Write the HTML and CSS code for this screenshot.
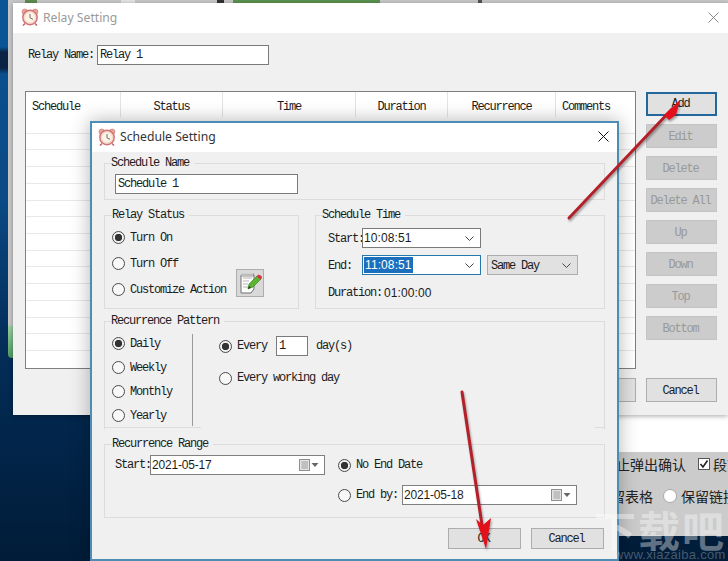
FILE: index.html
```html
<!DOCTYPE html>
<html lang="en">
<head>
<meta charset="utf-8">
<title>Relay Setting</title>
<link rel="stylesheet" href="styles.css">
</head>
<body>
<div class="desk">
  <div class="back-top"></div>
  <div class="back-left"></div>
  <div class="back-right">
    <div class="back-white"></div>
    <div class="back-gray">
      <div class="back-row first"><span>禁止弹出确认</span><span class="check"><svg viewBox="0 0 10 10" width="10" height="10"><path d="M1.5 5l2.5 3 4.500-6.500" fill="none" stroke="#222" stroke-width="1.600"/></svg></span><span>段前</span></div>
      <div class="back-row second"><span>保留表格</span><span class="back-radio"></span><span>保留链接</span></div>
    </div>
  </div>

  <section class="window relay">
    <header class="titlebar relay-title">
      <svg class="clock" viewBox="0 0 18 18" width="18" height="18"><use href="#clock-icon"/></svg>
      <span class="title-text">Relay Setting</span>
      <svg class="close" viewBox="0 0 11 11" width="11" height="11"><path d="M0.500 0.500l10 10M10.500 0.500l-10 10" stroke="#8a8a8a" stroke-width="1"/></svg>
    </header>
    <div class="relay-body">
      <div class="name-row"><span class="name-label">Relay Name:</span><div class="field name-field">Relay 1</div></div>
      <div class="relay-grid">
        <table class="list">
          <thead>
            <tr><th class="c1">Schedule</th><th class="c2">Status</th><th class="c3">Time</th><th class="c4">Duration</th><th class="c5">Recurrence</th><th class="c6">Comments</th></tr>
          </thead>
          <tbody>
            <tr><td colspan="6"></td></tr><tr><td colspan="6"></td></tr><tr><td colspan="6"></td></tr>
            <tr><td colspan="6"></td></tr><tr><td colspan="6"></td></tr><tr><td colspan="6"></td></tr>
            <tr><td colspan="6"></td></tr><tr><td colspan="6"></td></tr><tr><td colspan="6"></td></tr>
            <tr><td colspan="6"></td></tr><tr><td colspan="6"></td></tr><tr><td colspan="6"></td></tr>
            <tr><td colspan="6"></td></tr><tr><td colspan="6"></td></tr><tr><td colspan="6"></td></tr>
          </tbody>
        </table>
        <div class="side">
          <div class="btn add">Add</div>
          <div class="btn off">Edit</div>
          <div class="btn off">Delete</div>
          <div class="btn off">Delete All</div>
          <div class="btn off">Up</div>
          <div class="btn off">Down</div>
          <div class="btn off">Top</div>
          <div class="btn off">Bottom</div>
        </div>
        <div class="btn relay-ok">OK</div>
        <div class="btn nudge">Cancel</div>
      </div>
    </div>
  </section>

  <section class="window dialog">
    <header class="titlebar dialog-title">
      <svg class="clock" viewBox="0 0 18 18" width="18" height="18"><use href="#clock-icon"/></svg>
      <span class="title-text dark">Schedule Setting</span>
      <svg class="close" viewBox="0 0 11 11" width="11" height="11"><path d="M0.500 0.500l10 10M10.500 0.500l-10 10" stroke="#111" stroke-width="1"/></svg>
    </header>
    <div class="dialog-body">
      <fieldset class="group g-name">
        <legend>Schedule Name</legend>
        <div class="field sched-field">Schedule 1</div>
      </fieldset>

      <div class="two-up">
        <fieldset class="group g-status">
          <legend>Relay Status</legend>
          <div class="status-inner">
            <div class="stack26">
              <label class="radio"><input type="radio" name="st" checked>Turn On</label>
              <label class="radio"><input type="radio" name="st">Turn Off</label>
              <label class="radio"><input type="radio" name="st">Customize Action</label>
            </div>
            <div class="icon-btn">
              <svg viewBox="0 0 26 26" width="26" height="26">
                <path d="M4 5h13v14l-3 4H4z" fill="#fdfdfd" stroke="#6f6f6f"/>
                <path d="M6 8h9M6 11h6M6 14h5M6 17h6" stroke="#b5b5b5"/>
                <path d="M4 3.500h13v3H4z" fill="#8f8f8f"/>
                <path d="M5 3v3M7 3v3M9 3v3M11 3v3M13 3v3M15 3v3" stroke="#fff" stroke-width=".8"/>
                <path d="M11 19l1-5 8-8 4 3-8 8z" fill="#5cb531" stroke="#3c8a1f" stroke-width=".7"/>
                <path d="M19.500 6.500l2-2 3 1.500.5 2-1.500 1.500z" fill="#d8324a"/>
                <path d="M11 19l1-3 2 1.500z" fill="#2c3b1c"/>
              </svg>
            </div>
          </div>
        </fieldset>
        <fieldset class="group g-time">
          <legend>Schedule Time</legend>
          <div class="time-inner">
            <div class="time-row"><span class="time-label">Start:</span>
              <div class="combo"><span class="num">10:08:51</span><svg class="chev" viewBox="0 0 9 5" width="9" height="5"><path d="M.5.500l4 4 4-4" fill="none" stroke="#444"/></svg></div>
            </div>
            <div class="time-row"><span class="time-label">End:</span>
              <div class="combo focus"><span class="num sel">11:08:51</span><svg class="chev" viewBox="0 0 9 5" width="9" height="5"><path d="M.5.500l4 4 4-4" fill="none" stroke="#444"/></svg></div>
              <div class="combo select"><span class="select-text">Same Day</span><svg class="chev" viewBox="0 0 9 5" width="9" height="5"><path d="M.5.500l4 4 4-4" fill="none" stroke="#444"/></svg></div>
            </div>
            <div class="duration"><span>Duration:</span><span class="num">01:00:00</span></div>
          </div>
        </fieldset>
      </div>

      <fieldset class="group g-pattern">
        <legend>Recurrence Pattern</legend>
        <div class="pattern-inner">
          <div class="stack24">
            <label class="radio"><input type="radio" name="rp" checked>Daily</label>
            <label class="radio"><input type="radio" name="rp">Weekly</label>
            <label class="radio"><input type="radio" name="rp">Monthly</label>
            <label class="radio"><input type="radio" name="rp">Yearly</label>
          </div>
          <div class="every">
            <div class="every-row">
              <label class="radio"><input type="radio" name="ev" checked>Every</label>
              <div class="field spin">1</div>
              <span>day(s)</span>
            </div>
            <label class="radio"><input type="radio" name="ev">Every working day</label>
          </div>
        </div>
      </fieldset>

      <fieldset class="group g-range">
        <legend>Recurrence Range</legend>
        <div class="range-inner">
          <div class="range-row first">
            <span class="range-start">Start:</span>
            <div class="date"><span class="num">2021-05-17</span><svg class="cal" viewBox="0 0 20 12" width="20" height="12"><use href="#cal-icon"/></svg></div>
            <label class="radio range-radio"><input type="radio" name="rr" checked>No End Date</label>
          </div>
          <div class="range-row second">
            <label class="radio"><input type="radio" name="rr">End by:</label>
            <div class="date"><span class="num">2021-05-18</span><svg class="cal" viewBox="0 0 20 12" width="20" height="12"><use href="#cal-icon"/></svg></div>
          </div>
        </div>
      </fieldset>

      <div class="footer">
        <div class="btn wide">OK</div>
        <div class="btn wide">Cancel</div>
      </div>
    </div>
  </section>

  <div class="watermark"><span class="wm-big">下载吧</span><span class="wm-url">www.xiazaiba.com</span></div>

  <svg class="arrows" viewBox="0 0 728 561" width="728" height="561">
    <path d="M569 218L672 109" stroke="#b3202a" stroke-width="3" stroke-linecap="round"/>
    <path d="M680 100L676 115 669 120 664 115z" fill="#e3101c"/>
    <path d="M462 392L482 525" stroke="#b3202a" stroke-width="3" stroke-linecap="round"/>
    <path d="M486 549L476 519 483 525 491 518z" fill="#e3101c"/>
  </svg>

  <svg class="defs" width="0" height="0">
    <defs>
      <symbol id="clock-icon" viewBox="0 0 18 18">
        <path d="M4 15.500l-2 2M14 15.500l2 2" stroke="#c2606a" stroke-width="1.500"/>
        <circle cx="3.800" cy="3.800" r="2.800" fill="#e9a59a" stroke="#c77b6f" stroke-width=".6"/>
        <circle cx="14.200" cy="3.800" r="2.800" fill="#e9a59a" stroke="#c77b6f" stroke-width=".6"/>
        <circle cx="9" cy="9.500" r="7.200" fill="#f6d9c5" stroke="#d0727a" stroke-width="1.400"/>
        <circle cx="9" cy="9.500" r="5" fill="#fbf3e8"/>
        <path d="M9 6v3.800l3 1.500" fill="none" stroke="#7a6b66" stroke-width="1"/>
      </symbol>
      <symbol id="cal-icon" viewBox="0 0 20 12">
        <rect x=".5" y=".5" width="10" height="11" fill="#e4e4e4" stroke="#8f8f8f"/>
        <path d="M2 3h7M2 5h7M2 7h7M2 9h7M4 2v8M6 2v8M8 2v8" stroke="#a8a8a8" stroke-width=".7"/>
        <path d="M12.500 4h7l-3.500 4z" fill="#666"/>
      </symbol>
    </defs>
  </svg>
</div>
</body>
</html>
```

FILE: styles.css
```css
* { box-sizing: border-box; }
html, body { margin: 0; padding: 0; }
body {
  width: 728px;
  height: 561px;
  overflow: hidden;
  font-family: "Liberation Mono", "Noto Sans CJK SC", monospace;
  font-size: 12px;
  letter-spacing: -1.2px;
  color: #1c1c1c;
}
.desk {
  position: relative;
  width: 728px;
  height: 561px;
  overflow: hidden;
  background: linear-gradient(180deg, #0a5595 0, #0a5595 47px, #0a2344 52px, #0a2344 68px, #0b4f8e 74px, #0a4a85 200px, #04305c 330px, #02274d 420px, #011c38 561px);
}
.back-top {
  position: absolute;
  left: 8px; top: 0;
  width: 720px; height: 4px;
  background: linear-gradient(90deg, #c8c8c8 0 17px, #5c8f50 17px 29px, #c9c9c9 29px 113px, #e6e6e6 113px 127px, #c9c9c9 127px 209px, #333 209px 216px, #c9c9c9 216px 225px, #5b9350 225px 372px, #c9c9c9 372px 470px, #555 470px 474px, #c9c9c9 474px 720px);
}
.back-left {
  position: absolute;
  left: 8px; top: 0;
  width: 8px; height: 358px;
  border-radius: 0 0 0 4px;
  background: linear-gradient(180deg, #c8c8c8 0, #c8c8c8 325px, #9ccfa4 326px, #4f9a60 358px);
}
.back-right {
  position: absolute;
  left: 590px; top: 415px;
  width: 138px;
  overflow: hidden;
}
.back-white { height: 37px; background: #fff; }
.back-gray {
  height: 84px;
  background: #cbcbcb;
  font-family: "Noto Sans CJK SC", sans-serif;
  font-size: 14px;
  letter-spacing: 0;
  color: #222;
  white-space: nowrap;
}
.back-row { display: flex; align-items: center; height: 24px; }
.back-row.first { padding-left: 12px; }
.back-row.second { padding-left: 7px; margin-top: 8px; }
.check {
  display: flex; align-items: center; justify-content: center;
  flex: none;
  width: 12px; height: 12px;
  margin: 0 3px 0 12px;
  background: #fff;
  border: 1px solid #555;
}
.back-radio {
  flex: none;
  width: 14px; height: 14px;
  margin: 0 4px 0 10px;
  border-radius: 50%;
  background: #fff;
  border: 1px solid #aaa;
}

.window { position: absolute; display: flex; flex-direction: column; }
.titlebar { display: flex; align-items: center; flex: none; background: #fff; }
.title-text {
  font-family: "Noto Sans", sans-serif;
  font-size: 12.2px;
  letter-spacing: 0;
  margin-left: 4px;
  color: #9a9a9a;
}
.title-text.dark { color: #333; }
.close { flex: none; margin-left: auto; }

.relay {
  left: 13px; top: 3px;
  width: 715px; height: 412px;
  background: #f0f0f0;
  box-shadow: 0 1px 5px rgba(0,0,0,.35);
}
.relay-title { height: 30px; padding: 0 9px 2px 8px; }
.relay-body { padding: 12px 11px 0 12px; }
.name-row { display: flex; align-items: center; height: 20px; padding-left: 3px; }
.name-label { width: 69px; }
.field {
  display: flex; align-items: center;
  height: 20px;
  padding-left: 2px;
  background: #fff;
  border: 1px solid #7a7a7a;
}
.name-field { width: 172px; }
.relay-grid {
  display: grid;
  grid-template-columns: 611px 71px;
  grid-template-rows: 278px 24px;
  column-gap: 10px;
  row-gap: 9px;
  margin-top: 26px;
}
.list {
  width: 611px; height: 278px;
  table-layout: fixed;
  border-collapse: separate;
  border-spacing: 0;
  background: #fff;
  border: 1px solid #7f7f7f;
}
.list th {
  height: 25px;
  padding: 8px 0 0;
  font-weight: normal;
  border-right: 1px solid #e4e4e4;
  vertical-align: top;
}
.list th:last-child { border-right: 0; }
.list .c1 { width: 95px; text-align: left; padding-left: 6px; }
.list .c2 { width: 102px; }
.list .c3 { width: 133px; }
.list .c4 { width: 92px; }
.list .c5 { width: 108px; }
.list .c6 { text-align: left; padding-left: 6px; }
.list td { height: 16px; padding: 0; border-bottom: 1px solid #e8e8e8; }
.list tbody tr:last-child td { border-bottom: 0; }

.side { display: flex; flex-direction: column; gap: 8px; padding-top: 1px; }
.btn {
  display: flex; align-items: center; justify-content: center;
  height: 24px;
  padding-right: 2px;
  background: #e1e1e1;
  border: 1px solid #adadad;
}
.btn.add { border: 2px solid #22689c; }
.btn.off { background: #cccccc; border-color: #c4c4c4; color: #999; padding-top: 2px; }
.btn.nudge { padding-top: 2px; }
.relay-ok { justify-self: end; width: 71px; }

.dialog {
  left: 90px; top: 121px;
  width: 529px; height: 440px;
  background: #f0f0f0;
  border: 2px solid #4d8cb5;
  box-shadow: 0 0 18px rgba(0,0,0,.3);
}
.dialog-title { height: 29px; padding: 0 8px 2px 6px; }
.dialog-body {
  display: flex; flex-direction: column;
  padding: 5px 12px 0;
}
.group {
  margin: 0;
  padding: 0;
  min-width: 0;
  border: 1px solid #dcdcdc;
}
.group legend {
  margin-left: 6px;
  padding: 0 5px 0 0;
  width: max-content;
  line-height: 12px;
}
.g-name { height: 43px; }
.sched-field { width: 183px; margin: 5px 0 0 10px; }
.two-up { display: flex; gap: 16px; margin-top: 9px; }
.g-status { width: 195px; height: 100px; }
.g-status legend { margin-left: 7px; }
.status-inner { display: flex; padding: 3px 0 0 7px; }
.stack26 { display: flex; flex-direction: column; width: 124px; }
.stack26 .radio { height: 26px; padding-top: 2px; }
.stack26 .radio input, .stack24 .radio input { margin-top: -2px; }
.radio { display: flex; align-items: center; gap: 5px; white-space: nowrap; }
.radio input {
  appearance: none;
  flex: none;
  width: 13px; height: 13px;
  margin: 0;
  border: 1px solid #4a4a4a;
  border-radius: 50%;
  background: #f8f8f8;
}
.radio input:checked {
  background: radial-gradient(circle, #333 0 3.400px, #f0f0f0 4px);
}
.icon-btn {
  align-self: flex-end;
  width: 28px; height: 28px;
  margin-bottom: 5px;
  background: #d9d9d9;
  border: 1px solid #adadad;
  display: flex; align-items: center; justify-content: center;
}
.g-time { flex: 1; height: 100px; }
.time-inner { padding: 7px 0 0 12px; }
.time-row { display: flex; align-items: center; height: 20px; margin-bottom: 7px; }
.time-label { width: 34px; flex: none; padding-top: 2px; }
.select-text { padding-top: 2px; }
.combo {
  display: flex; align-items: center;
  width: 119px; height: 20px;
  padding: 0 3px 0 1px;
  background: #fff;
  border: 1px solid #7a7a7a;
}
.combo.focus { border-color: #2478ad; }
.combo.select {
  width: 91px;
  margin-left: 6px;
  padding-left: 3px;
  background: #e1e1e1;
  border-color: #adadad;
}
.chev { margin-left: auto; margin-right: 3px; }
.num {
  font-family: "Liberation Sans", sans-serif;
  font-size: 12px;
  letter-spacing: 0.1px;
}
.date .num { letter-spacing: -0.2px; }
.sel { background: #1c6fbd; color: #fff; padding: 1px 1px; }
.duration { display: flex; align-items: center; gap: 2px; margin-top: 11px; }
.g-pattern {
  position: relative;
  height: 115px;
  margin-top: 6px;
  border-bottom-color: transparent;
}
.g-pattern::before, .g-pattern::after {
  content: "";
  position: absolute;
  bottom: -1px;
  height: 1px;
  background: #dcdcdc;
}
.g-pattern::before { left: -1px; width: 97px; }
.g-pattern::after { right: -1px; width: 10px; }
.pattern-inner { display: flex; padding: 4px 0 0 7px; }
.stack24 {
  display: flex; flex-direction: column;
  width: 81px;
  background: linear-gradient(#9a9a9a, #9a9a9a) right 3px / 1px calc(100% - 4px) no-repeat;
}
.stack24 .radio { height: 24px; padding-top: 2px; }
.every { display: flex; flex-direction: column; gap: 15px; padding: 5px 0 0 26px; }
.every-row { display: flex; align-items: center; gap: 9px; }
.spin { width: 32px; margin-right: -1px; }
.g-range { height: 80px; margin-top: 8px; }
.g-range legend { margin-left: 7px; }
.range-inner { padding-top: 5px; }
.range-row { display: flex; align-items: center; height: 20px; }
.range-row.first { padding-left: 10px; }
.range-row.second { justify-content: flex-end; padding-right: 27px; margin-top: 10px; }
.range-start { width: 35px; }
.range-radio { margin-left: 13px; }
.date {
  display: flex; align-items: center; justify-content: space-between;
  width: 175px; height: 20px;
  padding: 0 5px 0 1px;
  background: #fff;
  border: 1px solid #7f7f7f;
}
.second .radio { width: 64px; }
.footer { display: flex; justify-content: flex-end; gap: 10px; margin-top: 10px; padding-right: 1px; }
.btn.wide { width: 73px; height: 21px; }

.watermark {
  position: absolute;
  left: 594px; top: 510px;
  width: 134px;
  display: flex; flex-direction: column;
  color: rgba(255,255,255,.38);
  pointer-events: none;
  white-space: nowrap;
}
.wm-big {
  font-family: "Noto Sans CJK SC", sans-serif;
  font-size: 42px;
  font-weight: 700;
  line-height: 38px;
  letter-spacing: 2px;
}
.wm-url {
  font-family: "Liberation Sans", sans-serif;
  font-size: 13px;
  line-height: 13px;
  letter-spacing: 0.3px;
  margin-left: 20px;
  color: rgba(255,255,255,.28);
}
.arrows {
  position: absolute;
  left: 0; top: 0;
  filter: drop-shadow(1px 2px 1px rgba(0,0,0,.35));
  pointer-events: none;
}
.defs { position: absolute; }
```
